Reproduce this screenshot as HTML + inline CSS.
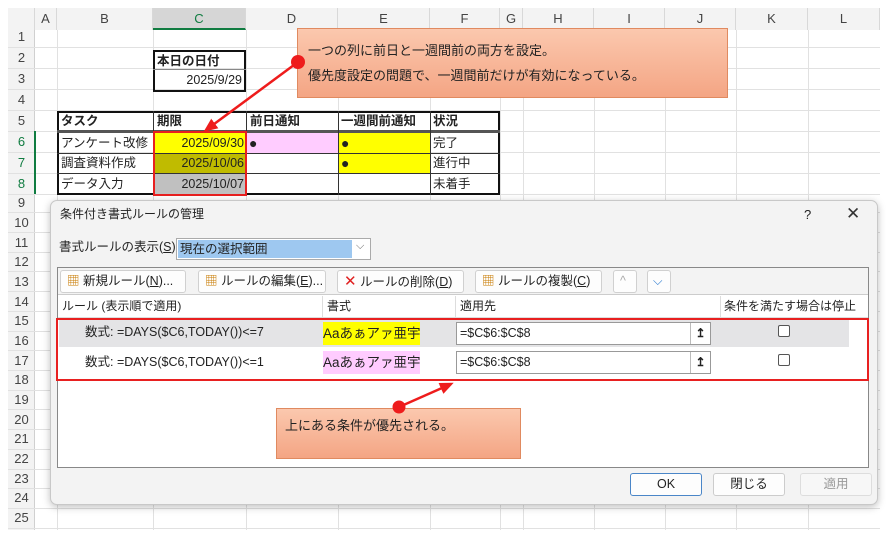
<!DOCTYPE html>
<html><head><meta charset="utf-8"><style>
*{margin:0;padding:0;box-sizing:border-box;white-space:nowrap}
body{width:886px;height:536px;background:#fff;position:relative;overflow:hidden;font-family:"Liberation Sans","Noto Sans CJK JP",sans-serif;font-size:12px;color:#222;line-height:1.2}
.a{position:absolute}
.hd{position:absolute;top:8px;height:22px;line-height:22px;text-align:center;color:#444;font-size:13px;background:#f3f3f3;border-right:1px solid #d8d8d8}
.rn{position:absolute;left:8px;width:27px;text-align:center;color:#444;font-size:13px}
.t{position:absolute;height:20px;line-height:20px;font-size:12.5px}
.b{font-weight:bold}
.btn{position:absolute;top:270px;height:23px;line-height:21px;background:#fdfdfd;border:1px solid #d0d0d0;border-radius:3px;font-size:12.5px;padding-left:6px}
</style></head><body>
<div class="a" style="left:8px;top:8px;width:27px;height:522px;background:#f3f3f3;border-right:1px solid #d0d0d0"></div>
<svg class="a" style="left:0;top:0" width="886" height="536">
<g stroke="#e1e1e1" stroke-width="1">
<line x1="57.5" y1="30" x2="57.5" y2="530"/><line x1="153.5" y1="30" x2="153.5" y2="530"/><line x1="246.5" y1="30" x2="246.5" y2="530"/><line x1="338.5" y1="30" x2="338.5" y2="530"/><line x1="430.5" y1="30" x2="430.5" y2="530"/><line x1="500.5" y1="30" x2="500.5" y2="530"/><line x1="523.5" y1="30" x2="523.5" y2="530"/><line x1="594.5" y1="30" x2="594.5" y2="530"/><line x1="665.5" y1="30" x2="665.5" y2="530"/><line x1="736.5" y1="30" x2="736.5" y2="530"/><line x1="808.5" y1="30" x2="808.5" y2="530"/>
<line x1="8" y1="47.5" x2="880" y2="47.5"/><line x1="8" y1="68.5" x2="880" y2="68.5"/><line x1="8" y1="89.5" x2="880" y2="89.5"/><line x1="8" y1="110.5" x2="880" y2="110.5"/><line x1="8" y1="131.5" x2="880" y2="131.5"/><line x1="8" y1="152.5" x2="880" y2="152.5"/><line x1="8" y1="173.5" x2="880" y2="173.5"/><line x1="8" y1="194.5" x2="880" y2="194.5"/>
<line x1="8" y1="212.5" x2="880" y2="212.5"/><line x1="8" y1="232.5" x2="880" y2="232.5"/><line x1="8" y1="252.5" x2="880" y2="252.5"/><line x1="8" y1="271.5" x2="880" y2="271.5"/><line x1="8" y1="291.5" x2="880" y2="291.5"/><line x1="8" y1="311.5" x2="880" y2="311.5"/><line x1="8" y1="331.5" x2="880" y2="331.5"/><line x1="8" y1="350.5" x2="880" y2="350.5"/><line x1="8" y1="370.5" x2="880" y2="370.5"/><line x1="8" y1="390.5" x2="880" y2="390.5"/><line x1="8" y1="409.5" x2="880" y2="409.5"/><line x1="8" y1="429.5" x2="880" y2="429.5"/><line x1="8" y1="449.5" x2="880" y2="449.5"/><line x1="8" y1="469.5" x2="880" y2="469.5"/><line x1="8" y1="488.5" x2="880" y2="488.5"/><line x1="8" y1="508.5" x2="880" y2="508.5"/><line x1="8" y1="528.5" x2="880" y2="528.5"/>
</g></svg>
<div class="hd" style="left:8px;width:27px"></div>
<div class="hd" style="left:35px;width:22px">A</div>
<div class="hd" style="left:57px;width:96px">B</div>
<div class="hd" style="left:153px;width:93px;background:#d6d6d6;color:#107c41;border-bottom:2px solid #107c41">C</div>
<div class="hd" style="left:246px;width:92px">D</div>
<div class="hd" style="left:338px;width:92px">E</div>
<div class="hd" style="left:430px;width:70px">F</div>
<div class="hd" style="left:500px;width:23px">G</div>
<div class="hd" style="left:523px;width:71px">H</div>
<div class="hd" style="left:594px;width:71px">I</div>
<div class="hd" style="left:665px;width:71px">J</div>
<div class="hd" style="left:736px;width:72px">K</div>
<div class="hd" style="left:808px;width:72px">L</div>
<div class="rn" style="top:29px">1</div><div class="rn" style="top:50px">2</div><div class="rn" style="top:71px">3</div><div class="rn" style="top:92px">4</div><div class="rn" style="top:113px">5</div>
<div class="rn" style="top:134px;color:#107c41">6</div><div class="rn" style="top:155px;color:#107c41">7</div><div class="rn" style="top:176px;color:#107c41">8</div>
<div class="rn" style="top:195px">9</div><div class="rn" style="top:215px">10</div><div class="rn" style="top:235px">11</div><div class="rn" style="top:254px">12</div><div class="rn" style="top:274px">13</div><div class="rn" style="top:294px">14</div><div class="rn" style="top:313px">15</div><div class="rn" style="top:333px">16</div><div class="rn" style="top:353px">17</div><div class="rn" style="top:372px">18</div><div class="rn" style="top:392px">19</div><div class="rn" style="top:412px">20</div><div class="rn" style="top:431px">21</div><div class="rn" style="top:451px">22</div><div class="rn" style="top:471px">23</div><div class="rn" style="top:490px">24</div><div class="rn" style="top:510px">25</div>
<div class="a" style="left:34px;top:131px;width:2px;height:63px;background:#107c41"></div>
<div class="a" style="left:153px;top:50px;width:93px;height:42px;border:2px solid #111"></div>
<div class="t b" style="left:157px;top:51px">本日の日付</div>
<div class="a" style="left:153px;top:69px;width:93px;height:1px;background:#888"></div>
<div class="t" style="left:153px;top:70px;width:89px;text-align:right">2025/9/29</div>
<div class="a" style="left:57px;top:111px;width:443px;height:84px;border:2px solid #111"></div>
<div class="a" style="left:57px;top:130px;width:443px;height:3px;background:#555"></div>
<div class="a" style="left:155px;top:133px;width:91px;height:20px;background:#ffff00"></div>
<div class="a" style="left:155px;top:153px;width:91px;height:21px;background:#c0bb00"></div>
<div class="a" style="left:155px;top:174px;width:91px;height:20px;background:#c0c0c0"></div>
<div class="a" style="left:247px;top:133px;width:91px;height:20px;background:#ffccff"></div>
<div class="a" style="left:339px;top:133px;width:91px;height:20px;background:#ffff00"></div>
<div class="a" style="left:339px;top:153px;width:91px;height:21px;background:#ffff00"></div>
<svg class="a" style="left:0;top:0" width="886" height="200"><g stroke="#333" stroke-width="1">
<line x1="153.5" y1="111" x2="153.5" y2="195"/><line x1="246.5" y1="111" x2="246.5" y2="195"/><line x1="338.5" y1="111" x2="338.5" y2="195"/><line x1="430.5" y1="111" x2="430.5" y2="195"/>
<line x1="57" y1="153.5" x2="500" y2="153.5"/><line x1="57" y1="173.5" x2="500" y2="173.5"/></g></svg>
<div class="t b" style="left:61px;top:111px">タスク</div>
<div class="t b" style="left:157px;top:111px">期限</div>
<div class="t b" style="left:250px;top:111px">前日通知</div>
<div class="t b" style="left:341px;top:111px">一週間前通知</div>
<div class="t b" style="left:433px;top:111px">状況</div>
<div class="t" style="left:61px;top:133px">アンケート改修</div>
<div class="t" style="left:61px;top:153px">調査資料作成</div>
<div class="t" style="left:61px;top:174px">データ入力</div>
<div class="t" style="left:155px;top:133px;width:89px;text-align:right">2025/09/30</div>
<div class="t" style="left:155px;top:153px;width:89px;text-align:right">2025/10/06</div>
<div class="t" style="left:155px;top:174px;width:89px;text-align:right">2025/10/07</div>
<div class="t" style="left:249px;top:133px;font-size:14px">●</div>
<div class="t" style="left:341px;top:133px;font-size:14px">●</div>
<div class="t" style="left:341px;top:153px;font-size:14px">●</div>
<div class="t" style="left:433px;top:133px">完了</div>
<div class="t" style="left:433px;top:153px">進行中</div>
<div class="t" style="left:433px;top:174px">未着手</div>
<div class="a" style="left:153px;top:131px;width:94px;height:65px;border:2px solid #e82020"></div>
<div class="a" style="left:297px;top:28px;width:431px;height:70px;background:linear-gradient(#fbc8ae,#f4a584);border:1px solid #e08a60;font-size:13px;padding:9px 0 0 10px;line-height:25px;color:#222">一つの列に前日と一週間前の両方を設定。<br>優先度設定の問題で、一週間前だけが有効になっている。</div>
<div class="a" style="left:50px;top:200px;width:828px;height:305px;background:#f3f3f3;border:1px solid #c8c8c8;border-radius:7px;box-shadow:0 2px 8px rgba(0,0,0,.25)"></div>
<div class="a" style="left:60px;top:207px;font-size:12px">条件付き書式ルールの管理</div>
<div class="a" style="left:804px;top:207px;font-size:13px">?</div>
<div class="a" style="left:846px;top:204px;font-size:17px;color:#333">✕</div>
<div class="a" style="left:59px;top:240px;font-size:12.5px">書式ルールの表示(<u>S</u>):</div>
<div class="a" style="left:176px;top:238px;width:195px;height:22px;background:#fff;border:1px solid #aaa"></div>
<div class="a" style="left:178px;top:240px;width:174px;height:18px;background:#9ec8f0;font-size:12.5px;line-height:18px;padding-left:2px">現在の選択範囲</div>
<div class="a" style="left:356px;top:240px;font-size:11px;color:#666">⌵</div>
<div class="a" style="left:57px;top:267px;width:812px;height:201px;background:#fff;border:1px solid #888"></div>
<div class="a" style="left:58px;top:268px;width:810px;height:27px;background:#f3f3f3;border-bottom:1px solid #ccc"></div>
<div class="btn" style="left:60px;width:126px"><span style="color:#c87a00">▦</span> 新規ルール(<u>N</u>)...</div>
<div class="btn" style="left:198px;width:128px"><span style="color:#c87a00">▦</span> ルールの編集(<u>E</u>)...</div>
<div class="btn" style="left:337px;width:127px"><span style="color:#e02020;font-size:15px">✕</span> ルールの削除(<u>D</u>)</div>
<div class="btn" style="left:475px;width:127px"><span style="color:#c87a00">▦</span> ルールの複製(<u>C</u>)</div>
<div class="btn" style="left:613px;width:24px;color:#aaa;padding-left:6px">^</div>
<div class="btn" style="left:647px;width:24px;color:#2a7ad0;padding-left:5px">⌵</div>
<div class="a" style="left:58px;top:295px;width:810px;height:23px;border-bottom:1px solid #ddd"></div>
<div class="a" style="left:62px;top:299px;font-size:12px">ルール (表示順で適用)</div>
<div class="a" style="left:322px;top:296px;width:1px;height:22px;background:#ddd"></div>
<div class="a" style="left:327px;top:299px;font-size:12px">書式</div>
<div class="a" style="left:455px;top:296px;width:1px;height:22px;background:#ddd"></div>
<div class="a" style="left:460px;top:299px;font-size:12px">適用先</div>
<div class="a" style="left:720px;top:296px;width:1px;height:22px;background:#ddd"></div>
<div class="a" style="left:724px;top:299px;font-size:12px">条件を満たす場合は停止</div>
<div class="a" style="left:59px;top:319px;width:790px;height:28px;background:#e4e4e6"></div>
<div class="a" style="left:85px;top:325px;font-size:12.5px">数式: =DAYS($C6,TODAY())&lt;=7</div>
<div class="a" style="left:85px;top:355px;font-size:12.5px">数式: =DAYS($C6,TODAY())&lt;=1</div>
<div class="a" style="left:323px;top:322px;width:97px;height:23px;background:#ffff00;font-size:13.5px;line-height:23px;text-align:center;overflow:hidden">Aaあぁアァ亜宇</div>
<div class="a" style="left:323px;top:351px;width:97px;height:23px;background:#ffccff;font-size:13.5px;line-height:23px;text-align:center;overflow:hidden">Aaあぁアァ亜宇</div>
<div class="a" style="left:456px;top:322px;width:255px;height:23px;background:#fff;border:1px solid #999;font-size:12.5px;line-height:21px;padding-left:3px">=$C$6:$C$8</div>
<div class="a" style="left:456px;top:351px;width:255px;height:23px;background:#fff;border:1px solid #999;font-size:12.5px;line-height:21px;padding-left:3px">=$C$6:$C$8</div>
<div class="a" style="left:690px;top:323px;width:20px;height:21px;border-left:1px solid #bbb;text-align:center;font-weight:bold;line-height:21px">↥</div>
<div class="a" style="left:690px;top:352px;width:20px;height:21px;border-left:1px solid #bbb;text-align:center;font-weight:bold;line-height:21px">↥</div>
<div class="a" style="left:778px;top:325px;width:12px;height:12px;border:1px solid #555;border-radius:2px;background:#fff"></div>
<div class="a" style="left:778px;top:354px;width:12px;height:12px;border:1px solid #555;border-radius:2px;background:#fff"></div>
<div class="a" style="left:56px;top:318px;width:813px;height:63px;border:2px solid #e82020"></div>
<div class="a" style="left:276px;top:408px;width:245px;height:51px;background:linear-gradient(#fbc8ae,#f4a584);border:1px solid #e08a60;font-size:13px;padding:9px 0 0 8px">上にある条件が優先される。</div>
<svg class="a" style="left:0;top:0" width="886" height="536">
<defs><marker id="m2" markerWidth="14" markerHeight="12" refX="11" refY="6" orient="auto" markerUnits="userSpaceOnUse"><path d="M0,0 L14,6 L0,12z" fill="#ee1c1c"/></marker></defs>
<line x1="298" y1="62" x2="206" y2="130" stroke="#ee1c1c" stroke-width="2.5" marker-end="url(#m2)"/>
<circle cx="298" cy="62" r="7" fill="#ee1c1c"/>
<line x1="399" y1="407" x2="451" y2="384" stroke="#ee1c1c" stroke-width="2.5" marker-end="url(#m2)"/>
<circle cx="399" cy="407" r="6.5" fill="#ee1c1c"/>
</svg>
<div class="a" style="left:630px;top:473px;width:72px;height:23px;background:#fdfdfd;border:1px solid #4a86c8;border-radius:3px;text-align:center;line-height:21px;font-size:12.5px">OK</div>
<div class="a" style="left:713px;top:473px;width:72px;height:23px;background:#fdfdfd;border:1px solid #ccc;border-radius:3px;text-align:center;line-height:21px;font-size:12.5px">閉じる</div>
<div class="a" style="left:800px;top:473px;width:72px;height:23px;background:#f7f7f7;border:1px solid #ddd;border-radius:3px;text-align:center;line-height:21px;font-size:12.5px;color:#999">適用</div>
</body></html>
